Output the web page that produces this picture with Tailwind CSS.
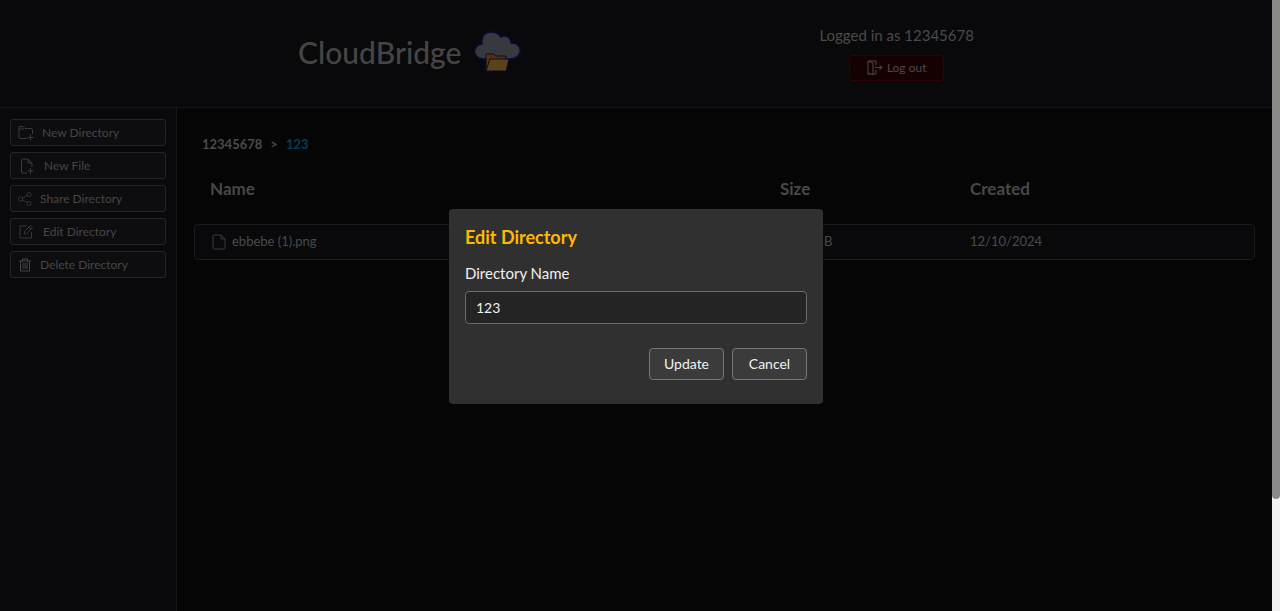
<!DOCTYPE html>
<html lang="en">
<head>
<meta charset="utf-8">
<meta name="viewport" content="width=device-width, initial-scale=1">
<title>CloudBridge</title>
<script src="https://cdn.jsdelivr.net/npm/@tailwindcss/browser@4"></script>
</head>
<body class="relative flex h-screen overflow-hidden bg-[#050505] font-['Lato','Open_Sans',sans-serif] text-[#4a4a4a]">
  <div class="flex min-w-0 flex-1 flex-col">
    <header class="flex h-[108px] shrink-0 items-center justify-evenly border-b border-[#17171a] bg-[#09090b] pb-1">
      <div class="flex items-center gap-3">
        <h1 class="text-[30px] leading-10 font-medium text-[#454545]">CloudBridge</h1>
        <svg class="h-12 w-12" viewBox="0 0 48 48" stroke-linejoin="round" aria-hidden="true">
          <path d="M10 31C-1 30-1 17 9 16C8 8 12 4 18 4C23 4 26 6 28 9C33 6 38 10 38 15C45 15 48 19 47 24C46 29 42 31 36 31Z" fill="#36393d" stroke="#0b0b35" stroke-width="1.5"/>
          <path d="M13 42V26H21L23 28H33V42Z" fill="#5a3006" stroke="#0b0b35"/>
          <path d="M17 31H36L33 43H13Z" fill="#5b4319" stroke="#0b0b35"/>
        </svg>
      </div>
      <div class="flex flex-col items-center gap-2">
        <p class="text-[15px] leading-6">Logged in as 12345678</p>
        <button class="flex h-[26px] w-[95px] items-center justify-center gap-1 rounded border border-[#2d0508] bg-[#150002] text-xs text-[#4d4848]">
          <svg class="h-4 w-4" viewBox="0 0 16 16" fill="none" stroke="currentColor" aria-hidden="true"><path d="M6 14H9V10M9 5V1H1V14H3M1 1L6 3V15L1 13M8 7.500H15M12.500 5L15 7.500L12.500 10"/></svg>
          Log out
        </button>
      </div>
    </header>
    <div class="flex min-h-0 flex-1">
      <nav class="flex w-[177px] shrink-0 flex-col gap-1.5 border-r border-[#17171a] bg-[#09090b] px-2.5 pt-[11px] text-xs text-[#454545]" aria-label="Directory actions">
        <button class="flex h-[27px] items-center gap-2 rounded-[3px] border border-[#252528] bg-[#0d0d10] px-[7px]">
          <svg class="h-4 w-4" viewBox="0 0 16 16" fill="none" stroke="#3a3a3a" aria-hidden="true"><path d="M9 13.500H2.500Q1 13.500 1 12V2Q1 1.500 2 1.500H5L7 3.500H13Q14.500 3.500 14.500 5V9M1 4H6M12.500 9.500V15.500M9.500 12.500H15.500"/></svg>
          New Directory
        </button>
        <button class="flex h-[27px] items-center gap-2 rounded-[3px] border border-[#252528] bg-[#0d0d10] px-[9px]">
          <svg class="h-4 w-4" viewBox="0 0 16 16" fill="none" stroke="#3a3a3a" aria-hidden="true"><path d="M7 15H2.500Q1.500 15 1.500 14V2Q1.500 1 2.500 1H8L12 5V9M8 1V5H12M10.500 10V16M7.500 13H13.500"/></svg>
          New File
        </button>
        <button class="flex h-[27px] items-center gap-2 rounded-[3px] border border-[#252528] bg-[#0d0d10] px-[7px]">
          <svg class="h-3.5 w-3.5" viewBox="0 0 14 14" fill="none" stroke="#333" aria-hidden="true"><rect x=".5" y="5" width="4" height="4" rx="1"/><circle cx="11" cy="2.500" r="2"/><circle cx="11" cy="11.500" r="2"/><path d="M4.500 6L9 3.500M4.500 8L9 10.500"/></svg>
          Share Directory
        </button>
        <button class="flex h-[27px] items-center gap-2.5 rounded-[3px] border border-[#252528] bg-[#0d0d10] px-2">
          <svg class="h-3.5 w-3.5" viewBox="0 0 14 14" fill="none" stroke="#383838" aria-hidden="true"><path d="M8 1H1V13H12.500V7M5 9L5.500 6.500L11.500.500L13.500 2.500L7.500 8.500L5 9M10 2L12 4"/></svg>
          Edit Directory
        </button>
        <button class="flex h-[27px] items-center gap-2 rounded-[3px] border border-[#252528] bg-[#0d0d10] px-[7px]">
          <svg class="h-3.5 w-3.5" viewBox="0 0 14 14" fill="none" stroke="currentColor" aria-hidden="true"><path d="M1 3H13M4.500 3V1H9.500V3M2.500 3V13H11.500V3M5 5V11M7 5V11M9 5V11"/></svg>
          Delete Directory
        </button>
      </nav>
      <main class="min-w-0 flex-1 px-[17px] pt-6">
        <nav class="flex gap-2 px-2 text-[13px] leading-6 font-bold" aria-label="Breadcrumb">
          <a href="#">12345678</a><span>&gt;</span><a href="#" class="text-[#003d5c]" aria-current="page">123</a>
        </nav>
        <table class="mt-[21px] block text-left">
          <thead class="block">
            <tr class="grid grid-cols-[3fr_1fr_1fr_79px] px-4 text-[17px] leading-6 font-extrabold text-[#484848]">
              <th>Name</th><th>Size</th><th>Created</th>
            </tr>
          </thead>
          <tbody class="mt-[23px] block">
            <tr class="grid h-9 grid-cols-[3fr_1fr_1fr_79px] items-center rounded border border-[#1b1b1d] bg-[#09090b] px-[15px] text-[13px] text-[#4a4a4a]">
              <td class="flex items-center gap-1.5">
                <svg class="h-4 w-4" viewBox="0 0 16 16" fill="none" stroke="#3a3a3a" aria-hidden="true"><path d="M4 1H11L15 5V14Q15 15 14 15H4Q3 15 3 14V2Q3 1 4 1M11 1V5H15"/></svg>
                ebbebe (1).png
              </td>
              <td>823.00 B</td>
              <td>12/10/2024</td>
            </tr>
          </tbody>
        </table>
      </main>
    </div>
  </div>
  <div class="flex w-2 shrink-0 flex-col bg-[#f1f1f1]" aria-hidden="true">
    <div class="h-[81.6%] rounded-b bg-[#8a8987]"></div>
  </div>
  <div class="absolute inset-y-0 right-2 left-0 flex items-center justify-center pt-0.5">
    <form role="dialog" aria-labelledby="dialog-title" class="w-[374px] rounded bg-[#303030] px-4 pt-4 pb-6 text-[#f0f0f0]">
      <h2 id="dialog-title" class="text-lg leading-6 font-bold text-[#ffb900]">Edit Directory</h2>
      <label for="directory-name" class="mt-3 block text-[15px] leading-6">Directory Name</label>
      <input id="directory-name" type="text" value="123" class="mt-1.5 h-[33px] w-full rounded border border-[#6b6b6b] bg-[#242424] px-2.5 text-sm outline-none">
      <div class="mt-6 flex justify-end gap-2">
        <button type="button" class="h-8 w-[75px] rounded border border-[#777] bg-[#3b3b3b] text-sm">Update</button>
        <button type="button" class="h-8 w-[75px] rounded border border-[#777] bg-[#3b3b3b] text-sm">Cancel</button>
      </div>
    </form>
  </div>
</body>
</html>
